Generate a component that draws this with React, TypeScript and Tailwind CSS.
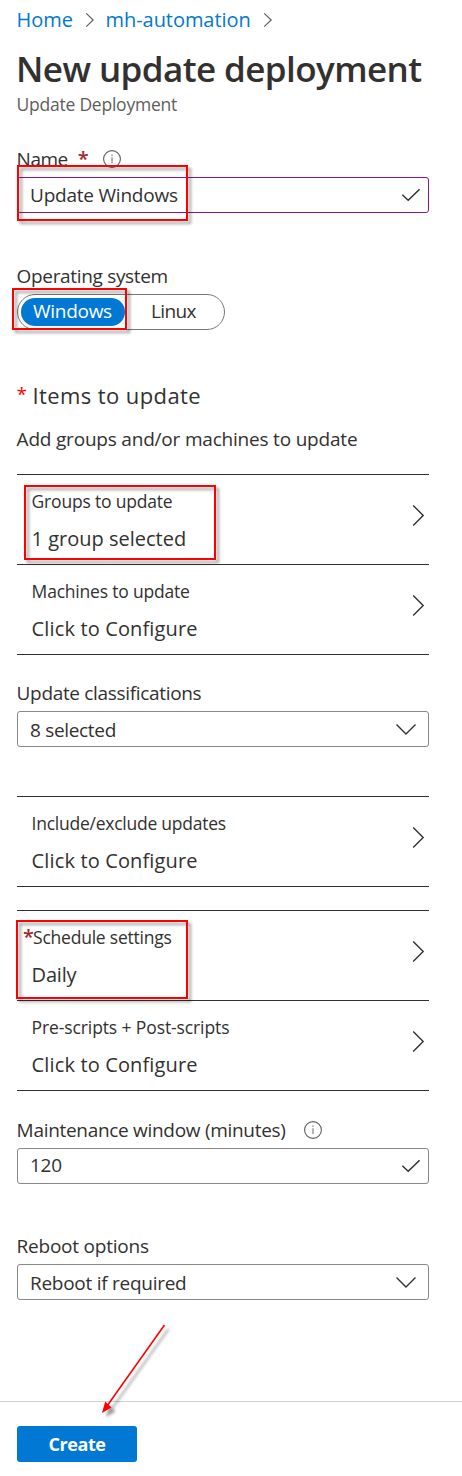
import type { ReactNode } from "react";

function CrumbChevron() {
  return (
    <svg width="10" height="16" viewBox="0 0 10 16" fill="none" stroke="#605e5c" strokeWidth="1.2">
      <path d="M1.2 1.4 8.2 8 1.2 14.6" />
    </svg>
  );
}

function RowChevron() {
  return (
    <svg width="14" height="24" viewBox="0 0 14 24" fill="none" stroke="#323130" strokeWidth="1.4">
      <path d="M1.2 2.4 11.2 12.5 1.2 22.6" />
    </svg>
  );
}

function DownChevron() {
  return (
    <svg width="22" height="13" viewBox="0 0 22 13" fill="none" stroke="#323130" strokeWidth="1.4">
      <path d="M1.5 1.5 11 11 20.5 1.5" />
    </svg>
  );
}

function Check() {
  return (
    <svg width="20" height="14" viewBox="0 0 20 14" fill="none" stroke="#323130" strokeWidth="1.5">
      <path d="M1.3 6.8 7.2 12.2 18.6 1.3" />
    </svg>
  );
}

function Info() {
  return (
    <svg width="20" height="20" viewBox="0 0 20 20" fill="none" stroke="#605e5c">
      <circle cx="10" cy="10" r="8.4" strokeWidth="1.1" />
      <path d="M10 8.2V14M10 5.6V7" strokeWidth="1.1" stroke="#797775" />
    </svg>
  );
}

function Label({ children }: { children: ReactNode }) {
  return <div className="ml-[16.6px] flex h-6 items-center whitespace-nowrap leading-6">{children}</div>;
}

function Field({ className, children }: { className: string; children: ReactNode }) {
  return (
    <div className={`ml-[17px] flex h-9 w-[412px] items-center justify-between rounded-[3px] border pl-3 ${className}`}>
      {children}
    </div>
  );
}

function Row({ title, value, titleClass = "", valueClass = "", required = false }: {
  title: string;
  value: string;
  titleClass?: string;
  valueClass?: string;
  required?: boolean;
}) {
  return (
    <div className="flex h-[90px] justify-between border-t border-[#323130] pr-[3px]">
      <div className={required ? "pl-[6px]" : "pl-[14.6px]"}>
        <div className={`mt-[14px] flex h-6 text-[17.5px] leading-6 ${titleClass}`}>
          {required && <span className="w-[10px] text-[20px] font-semibold text-[#a4262c]">*</span>}
          {title}
        </div>
        <div className={`mt-[13px] h-[25px] text-[20px] leading-[25px] ${required ? "pl-[8.6px]" : ""} ${valueClass}`}>{value}</div>
      </div>
      <div className="mt-[28px]">
        <RowChevron />
      </div>
    </div>
  );
}

function Rows({ className, children }: { className: string; children: ReactNode }) {
  return <div className={`ml-[17px] w-[412px] border-b border-[#323130] ${className}`}>{children}</div>;
}

function Mark({ className }: { className: string }) {
  return <div className={`absolute border-2 border-[#ff0000] drop-shadow-[3px_3px_1.5px_rgba(0,0,0,0.4)] ${className}`} />;
}

export default function App() {
  return (
    <div className="relative h-[1476px] w-[462px] overflow-hidden bg-white font-['Open_Sans','Noto_Sans',sans-serif] text-[19px] text-[#323130]">
      <nav className="ml-[16.5px] flex h-10 items-center text-[20px] leading-6 text-[#0078d4]">
        <span className="w-[68.5px]">Home</span>
        <CrumbChevron />
        <span className="ml-[10.5px] w-[157px] tracking-[-0.05px]">mh-automation</span>
        <CrumbChevron />
      </nav>
      <h1 className="mt-[5px] ml-4 h-12 whitespace-nowrap text-[35px] leading-[48px] font-[550] tracking-[-0.58px]">New update deployment</h1>
      <p className="-mt-px ml-[16.5px] h-6 text-[17.5px] leading-6 tracking-[-0.23px] text-[#605e5c]">Update Deployment</p>

      <div className="mt-[31px]">
        <Label>
          <span className="tracking-[-0.48px]">Name</span>
          <span className="ml-[10px] w-[24.4px] text-[20px] font-semibold text-[#a4262c]">*</span>
          <Info />
        </Label>
      </div>
      <div className="mt-[6px]">
        <Field className="border-[#881798] pr-[7px]">
          <span className="tracking-[-0.22px]">Update Windows</span>
          <Check />
        </Field>
      </div>

      <div className="mt-[51px]">
        <Label><span className="tracking-[-0.33px]">Operating system</span></Label>
      </div>
      <div className="mt-[6px] ml-[17px] flex h-9 w-[208px] items-center rounded-full border border-[#797775] pl-[3px]">
        <div className="flex h-7 w-[104px] items-center justify-center rounded-full bg-[#0078d4] pr-[1px] pb-[2px] tracking-[-0.29px] text-white">Windows</div>
        <div className="ml-[26px] pb-[2px] tracking-[-0.6px]">Linux</div>
      </div>

      <div className="mt-[50px] ml-[16.5px] flex h-[30px] text-[22px] leading-[30px] tracking-[0.4px]">
        <span className="w-4 text-[19px] leading-[28px] text-[#ff0000]">*</span>
        <span>Items to update</span>
      </div>
      <div className="mt-[17px]">
        <Label><span className="tracking-[-0.2px]">Add groups and/or machines to update</span></Label>
      </div>

      <Rows className="mt-[23px]">
        <Row title="Groups to update" value="1 group selected" titleClass="tracking-[-0.2px]" />
        <Row title="Machines to update" value="Click to Configure" titleClass="tracking-[-0.2px]" valueClass="tracking-[0.14px]" />
      </Rows>

      <div className="mt-[26px]">
        <Label><span className="tracking-[-0.33px]">Update classifications</span></Label>
      </div>
      <div className="mt-[6px]">
        <Field className="border-[#8a8886] pr-[11px]">
          <span className="pt-[2px] tracking-[-0.32px]">8 selected</span>
          <DownChevron />
        </Field>
      </div>

      <Rows className="mt-[49px]">
        <Row title="Include/exclude updates" value="Click to Configure" titleClass="tracking-[-0.25px]" valueClass="tracking-[0.14px]" />
      </Rows>
      <Rows className="mt-[23px]">
        <Row title="Schedule settings" value="Daily" titleClass="tracking-[-0.22px]" valueClass="tracking-[-0.2px]" required />
        <Row title="Pre-scripts + Post-scripts" value="Click to Configure" titleClass="tracking-[-0.11px]" valueClass="tracking-[0.14px]" />
      </Rows>

      <div className="mt-[27px]">
        <Label>
          <span className="w-[286.4px] tracking-[-0.3px]">Maintenance window (minutes)</span>
          <Info />
        </Label>
      </div>
      <div className="mt-[6px]">
        <Field className="border-[#8a8886] pr-[7px]">
          <span className="pb-[2px] tracking-[-0.3px]">120</span>
          <Check />
        </Field>
      </div>

      <div className="mt-[50px]">
        <Label><span className="tracking-[-0.23px]">Reboot options</span></Label>
      </div>
      <div className="mt-[6px]">
        <Field className="border-[#8a8886] pr-[11px]">
          <span className="pt-[2px] tracking-[-0.27px]">Reboot if required</span>
          <DownChevron />
        </Field>
      </div>

      <footer className="mt-[101px] border-t border-[#d2d0ce] pt-6 pl-[17px]">
        <button className="flex h-9 w-[120px] items-center justify-center rounded-[3px] bg-[#0078d4] text-[18px] font-bold tracking-[-0.4px] text-white">Create</button>
      </footer>

      <Mark className="top-[165px] left-[17px] h-[56px] w-[171px]" />
      <Mark className="top-[288px] left-[12px] h-[42px] w-[115px]" />
      <Mark className="top-[485px] left-[24px] h-[75px] w-[192px]" />
      <Mark className="top-[920px] left-[16px] h-[79px] w-[172px]" />
      <svg className="absolute top-[1318px] left-[96px] drop-shadow-[4px_4px_1.5px_rgba(0,0,0,0.4)]" width="80" height="104" viewBox="96 1318 80 104">
        <path d="M164.5 1325 107 1406" stroke="#ff0000" strokeWidth="1.6" />
        <path d="M102 1413 105.2 1401.5 111.5 1407.5Z" fill="#ff0000" />
      </svg>
    </div>
  );
}
